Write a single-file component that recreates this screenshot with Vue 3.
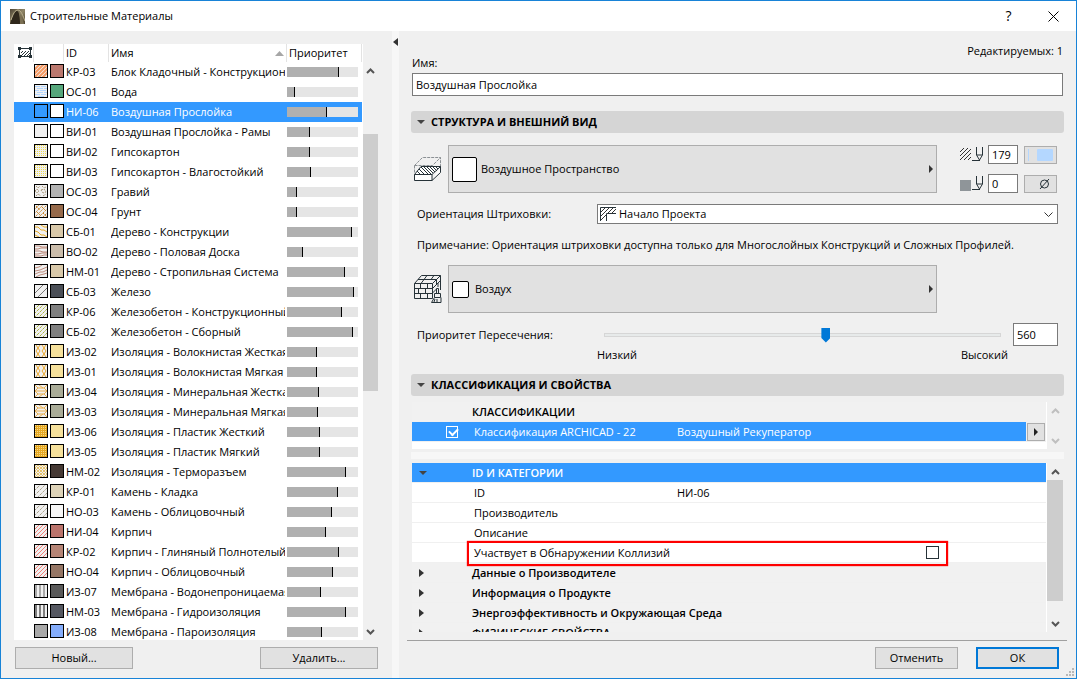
<script setup>
import { ref, computed } from 'vue';

// Build parallel diagonal strokes for a 12x12 hatch swatch
const diagonals = (step) => {
  let d = '';
  for (let s = step; s < 24; s += step) {
    d += `M-1 ${s + 1}L${s + 1} -1`;
  }
  return d;
};

// Build horizontal strokes, used with a dash array for dots and dashes
const rows = (step) => {
  let d = '';
  for (let y = 1; y < 12; y += step) {
    d += `M0 ${y - 0.5}H12`;
  }
  return d;
};

const hatches = {
  block: { d: diagonals(4), color: '#f79a62', width: 2 },
  water: { d: 'M0 1.500h5M6 1.500h5M2 3.500h6M9 3.500h3M0 5.500h4M5 5.500h6M2 7.500h6M9 7.500h3M0 9.500h5M6 9.500h5M3 11.500h6', color: '#b3d6ff' },
  none: { d: '', color: 'none', bg: 'transparent' },
  air: { d: '', color: 'none' },
  gypsum: { d: rows(2), color: '#f0dc50', dash: '1 1' },
  gravel: { d: 'M1 1l2 2 2-2M7 1l2 2 2-1M0 6l2-2 2 2-2 2zM6 5l3-1 2 3-3 1zM1 11l2-2 3 2M8 11l3-2', color: '#a8987a', dash: '2 1' },
  soil: { d: diagonals(4) + 'M1 1l4 4M7 2l4 4M2 7l4 4M8 8l4 4', color: '#c8862f', dash: '2 1' },
  wood: { d: 'M0 2h3l3 3h3l3 2M0 6l3 1 3 3h3l3 2M6 0l3 2h3M0 10l4 2', color: '#e8ac28' },
  floor: { d: 'M0 1h4l3 1h5M0 4h3l3-1h6M0 6h5l3 1h4M0 9h3l4-1h5M0 11h6l3-1h3', color: '#bd8b7c' },
  rafter: { d: 'M0 3l4-1 3-2M0 6l5-1 7-3M0 9l5-2h3l4-2M1 12l4-2 4-1 3-1', color: '#bd8b7c' },
  iron: { d: 'M0 8L8 0M3 12L12 3', color: '#777' },
  concrete: { d: diagonals(4), color: '#a9b23c', dash: '3 1' },
  wool: { d: 'M1 0l2 3-2 3 2 3-2 3M5 0L3 3l2 3-2 3 2 3M7 0l2 3-2 3 2 3-2 3M11 0L9 3l2 3-2 3 2 3', color: '#e9a830' },
  mineral: { d: 'M0 0l3 3h6l3-3M0 6l3-3M9 3l3 3M0 6h12M0 6l3 3h6l3-3M0 12l3-3M9 9l3 3M4 0l4 3M4 12l4-3', color: '#e9b050' },
  plastic: { d: rows(2), color: '#f6d98a', dash: '1 1', bg: '#e5a823' },
  thermo: { d: diagonals(3) + 'M0 9l3 3M0 6l6 6M0 3l9 9M0 0l12 12M3 0l9 9M6 0l6 6M9 0l3 3', color: '#e6c26c' },
  stone: { d: diagonals(5), color: '#aaa28c', dash: '3 1' },
  brick: { d: diagonals(4), color: '#f08078' },
  film: { d: 'M1 0V12M5 0V12M9 0V12', color: '#aaa', width: 2 },
  filmDark: { d: 'M1 0V12M5 0V12M9 0V12', color: '#808080', width: 2 },
  solid: { d: '', color: 'none', bg: '#a9a9a9' },
};

const materials = [
  { id: 'КР-03', name: 'Блок Кладочный - Конструкционный', hatch: 'block', color: '#bb786e', priority: 73 },
  { id: 'ОС-01', name: 'Вода', hatch: 'water', color: '#57a77c', priority: 11 },
  { id: 'НИ-06', name: 'Воздушная Прослойка', hatch: 'none', color: '#ffffff', priority: 56 },
  { id: 'ВИ-01', name: 'Воздушная Прослойка - Рамы', hatch: 'air', color: '#ffffff', priority: 32 },
  { id: 'ВИ-02', name: 'Гипсокартон', hatch: 'gypsum', color: '#ffffff', priority: 32 },
  { id: 'ВИ-03', name: 'Гипсокартон - Влагостойкий', hatch: 'gypsum', color: '#ffffff', priority: 34 },
  { id: 'ОС-03', name: 'Гравий', hatch: 'gravel', color: '#b3b3b3', priority: 14 },
  { id: 'ОС-04', name: 'Грунт', hatch: 'soil', color: '#966a4b', priority: 14 },
  { id: 'СБ-01', name: 'Дерево - Конструкции', hatch: 'wood', color: '#d9c9aa', priority: 92 },
  { id: 'ВО-02', name: 'Дерево - Половая Доска', hatch: 'floor', color: '#cbbdab', priority: 23 },
  { id: 'НМ-01', name: 'Дерево - Стропильная Система', hatch: 'rafter', color: '#d9c9aa', priority: 82 },
  { id: 'СБ-03', name: 'Железо', hatch: 'iron', color: '#4b4f57', priority: 94 },
  { id: 'КР-06', name: 'Железобетон - Конструкционный', hatch: 'concrete', color: '#808080', priority: 77 },
  { id: 'СБ-02', name: 'Железобетон - Сборный', hatch: 'concrete', color: '#808080', priority: 93 },
  { id: 'ИЗ-02', name: 'Изоляция - Волокнистая Жесткая', hatch: 'wool', color: '#f6e19c', priority: 42 },
  { id: 'ИЗ-01', name: 'Изоляция - Волокнистая Мягкая', hatch: 'wool', color: '#f6e19c', priority: 42 },
  { id: 'ИЗ-04', name: 'Изоляция - Минеральная Жесткая', hatch: 'mineral', color: '#aaac98', priority: 45 },
  { id: 'ИЗ-03', name: 'Изоляция - Минеральная Мягкая', hatch: 'mineral', color: '#aaac98', priority: 44 },
  { id: 'ИЗ-06', name: 'Изоляция - Пластик Жесткий', hatch: 'plastic', color: '#f6e19c', priority: 46 },
  { id: 'ИЗ-05', name: 'Изоляция - Пластик Мягкий', hatch: 'plastic', color: '#f6e19c', priority: 46 },
  { id: 'НМ-02', name: 'Изоляция - Терморазъем', hatch: 'thermo', color: '#453934', priority: 83 },
  { id: 'КР-01', name: 'Камень - Кладка', hatch: 'stone', color: '#ded3b8', priority: 72 },
  { id: 'НО-03', name: 'Камень - Облицовочный', hatch: 'stone', color: '#f7f7f7', priority: 63 },
  { id: 'НИ-04', name: 'Кирпич', hatch: 'brick', color: '#bb746c', priority: 55 },
  { id: 'КР-02', name: 'Кирпич - Глиняный Полнотелый', hatch: 'brick', color: '#b68576', priority: 73 },
  { id: 'НО-04', name: 'Кирпич - Облицовочный', hatch: 'brick', color: '#957665', priority: 65 },
  { id: 'ИЗ-07', name: 'Мембрана - Водонепроницаемая', hatch: 'film', color: '#5a5a5a', priority: 48 },
  { id: 'НМ-03', name: 'Мембрана - Гидроизоляция', hatch: 'filmDark', color: '#555861', priority: 83 },
  { id: 'ИЗ-08', name: 'Мембрана - Пароизоляция', hatch: 'solid', color: '#85adfb', priority: 49 },
];

const groups = [
  'Данные о Производителе',
  'Информация о Продукте',
  'Энергоэффективность и Окружающая Среда',
  'ФИЗИЧЕСКИЕ СВОЙСТВА',
];

const selectedId = ref('НИ-06');
const selected = computed(() => materials.find((m) => m.id === selectedId.value));
const fillPen = ref('179');
const backPen = ref('0');
const orientation = ref('project');
const intersection = ref(560);
const classified = ref(true);
const collision = ref(false);
</script>

<template>
  <div class="window">
    <header class="titlebar">
      <svg class="app-icon" viewBox="0 0 15 15">
        <defs>
          <linearGradient id="bronze" x1="0" y1="0" x2="1" y2="1">
            <stop offset="0" stop-color="#4d4433" />
            <stop offset="0.5" stop-color="#8f8566" />
            <stop offset="1" stop-color="#4a402d" />
          </linearGradient>
        </defs>
        <rect width="15" height="15" fill="url(#bronze)" />
        <path d="M0 15C2 9 4 2 7 2c2 0 3 6 3 13z" fill="#2f281b" />
        <path d="M1 11C3 5 5 1 8 1c3 0 5 6 7 11" fill="none" stroke="#b9af8d" />
        <path d="M9 3c2 3 4 8 5 12h-4c0-5 0-9-1-12z" fill="#7a6f54" />
      </svg>
      <h1>Строительные Материалы</h1>
      <button class="title-button" type="button">?</button>
      <button class="title-button" type="button" aria-label="Закрыть">
        <svg width="11" height="11" viewBox="0 0 11 11"><path d="M.5.5l10 10M10.500.5l-10 10" fill="none" stroke="#000" /></svg>
      </button>
    </header>

    <div class="content">
      <section class="list-pane">
        <div class="list-area">
          <div class="list">
            <table>
              <colgroup>
                <col class="col-icon" />
                <col class="col-swatch" />
                <col class="col-id" />
                <col />
                <col class="col-priority" />
              </colgroup>
              <thead>
                <tr>
                  <th>
                    <svg class="fill-icon" width="14" height="12" viewBox="0 0 14 12">
                      <path d="M1.500 1.500h11v8h-11zM3 9l5-5M6 9l5-5M9 9l3-3M3 6l2-2" fill="none" stroke="#263238" />
                      <path d="M0 0h3v3H0zM11 0h3v3h-3zM0 8h3v3H0zM11 8h3v3h-3z" fill="#263238" />
                    </svg>
                  </th>
                  <th></th>
                  <th class="id">ID</th>
                  <th class="name">
                    <div class="sort">
                      Имя
                      <svg width="9" height="5" viewBox="0 0 9 5"><path d="M0 5L4.500 0 9 5z" fill="#a6a6a6" /></svg>
                    </div>
                  </th>
                  <th class="priority">Приоритет</th>
                </tr>
              </thead>
              <tbody>
                <tr
                  v-for="item in materials"
                  :key="item.id"
                  :class="{ active: item.id === selectedId }"
                  @click="selectedId = item.id"
                >
                  <td></td>
                  <td>
                    <svg class="swatches" width="30" height="14" viewBox="0 0 30 14">
                      <rect x="0.5" y="0.5" width="13" height="13" :fill="hatches[item.hatch].bg || '#f0f0f0'" />
                      <svg x="1" y="1" width="12" height="12" viewBox="0 0 12 12">
                        <path
                          :d="hatches[item.hatch].d"
                          :stroke="hatches[item.hatch].color"
                          :stroke-width="hatches[item.hatch].width || 1"
                          :stroke-dasharray="hatches[item.hatch].dash"
                          fill="none"
                        />
                      </svg>
                      <rect x="0.5" y="0.5" width="13" height="13" fill="none" stroke="#000" />
                      <rect x="16.500" y="0.5" width="13" height="13" :fill="item.color" stroke="#000" />
                    </svg>
                  </td>
                  <td class="id">{{ item.id }}</td>
                  <td class="name"><div class="name-text">{{ item.name }}</div></td>
                  <td>
                    <div class="bar"><div class="bar-fill" :style="{ width: item.priority + '%' }"></div></div>
                  </td>
                </tr>
              </tbody>
            </table>
          </div>
          <div class="scrollbar list-scroll">
            <svg width="9" height="6" viewBox="0 0 9 6"><path d="M1 5l3.500-3.500L8 5" /></svg>
            <div class="track"><div class="thumb"></div></div>
            <svg width="9" height="6" viewBox="0 0 9 6"><path d="M1 1l3.500 3.500L8 1" /></svg>
          </div>
        </div>
        <div class="list-buttons">
          <button class="button wide" type="button">Новый...</button>
          <button class="button wide" type="button">Удалить...</button>
        </div>
      </section>

      <button class="splitter" type="button" aria-label="Свернуть">
        <svg width="5" height="8" viewBox="0 0 5 8"><path d="M5 0v8L0 4z" fill="#333" /></svg>
      </button>

      <section class="details">
        <div class="name-head">
          <label for="material-name">Имя:</label>
          <span>Редактируемых: 1</span>
        </div>
        <input id="material-name" class="field name-field" type="text" :value="selected.name" />

        <button class="section-head" type="button">
          <svg width="8" height="4" viewBox="0 0 8 4"><path d="M0 0h8L4 4z" fill="#444" /></svg>
          СТРУКТУРА И ВНЕШНИЙ ВИД
        </button>

        <div class="picker-row first">
          <svg class="side-icon" width="28" height="26" viewBox="0 0 28 26">
            <path d="M.5 9.500L8.500 1.500h18v9M.5 9.500v8" fill="none" stroke="#8b9094" stroke-dasharray="3 1" />
            <path d="M.5 9.500h18l8-8" fill="none" stroke="#8b9094" stroke-dasharray="3 1" />
            <path d="M.5 18.500h17.500v6H.5zM.5 18.500L7 10.500h19.500L18 18.500M26.500 10.500v6L18 24.500" fill="#fff" stroke="#263238" />
            <path d="M3 15l3 3M5 13l5 5M7 11l7 7M10 11l7 7M13 11l6 6M16 11l5 5M19 11l4 4M22 11l2 2" fill="none" stroke="#263238" />
          </svg>
          <button class="picker" type="button">
            <span class="preview large"></span>
            <span>Воздушное Пространство</span>
            <svg class="picker-arrow" width="4" height="8" viewBox="0 0 4 8"><path d="M0 0l4 4-4 4z" fill="#333" /></svg>
          </button>
          <div class="pens">
            <svg width="24" height="15" viewBox="0 0 24 15">
              <path d="M0 5l4-4M0 9l8-8M0 13l11-11M4 13l7-7M8 13l3-3" fill="none" stroke="#333" />
              <path d="M16.500 0v8l3 5 3-5V0M17 8h5M12 13.500h8" fill="none" stroke="#263238" />
            </svg>
            <input v-model="fillPen" class="field pen-field" type="text" aria-label="Перо штриховки" />
            <button class="button pen-button" type="button" aria-label="Цвет пера штриховки">
              <svg width="25" height="12" viewBox="0 0 25 12">
                <path d="M.5 0v12" stroke="#b4d7ff" />
                <rect x="9" width="16" height="12" rx="1" fill="#b4d7ff" />
              </svg>
            </button>
            <svg width="24" height="15" viewBox="0 0 24 15">
              <rect y="4" width="11" height="11" fill="#8f9599" />
              <path d="M16.500 0v8l3 5 3-5V0M17 8h5M12 13.500h8" fill="none" stroke="#263238" />
            </svg>
            <input v-model="backPen" class="field pen-field" type="text" aria-label="Перо фона" />
            <button class="button pen-button" type="button" aria-label="Цвет пера фона">
              <svg width="25" height="12" viewBox="0 0 25 12">
                <ellipse cx="16.500" cy="6" rx="4" ry="4" fill="none" stroke="#263238" />
                <path d="M12 11L21 1" stroke="#263238" />
              </svg>
            </button>
          </div>
        </div>

        <div class="orientation">
          <label for="orientation">Ориентация Штриховки:</label>
          <div class="select-box">
            <select id="orientation" v-model="orientation" class="field">
              <option value="project">Начало Проекта</option>
              <option value="element">Начало Элемента</option>
            </select>
            <svg class="select-icon" width="16" height="14" viewBox="0 0 16 14">
              <path d="M.5 14V.5H16M6.500 14V6.500H16" fill="none" stroke="#263238" />
              <path d="M1 5l4-4M1 9l8-8M1 13l5-5M7 7l6-6M11 7l5-5" fill="none" stroke="#333" />
            </svg>
            <svg class="select-arrow" width="9" height="5" viewBox="0 0 9 5"><path d="M.5.5l4 4 4-4" fill="none" stroke="#333" /></svg>
          </div>
        </div>

        <p class="note">
          Примечание: Ориентация штриховки доступна только для Многослойных Конструкций и Сложных Профилей.
        </p>

        <div class="picker-row">
          <svg class="side-icon" width="28" height="29" viewBox="0 0 28 29">
            <path d="M.5 8.500h18v15H.5zM.5 8.500l7-8h19l-8 8M26.500.5V15M.5 13.500h18M.5 18.500h18M6.500 8.500v5M13.500 8.500v5M4.500 13.500v5M11.500 13.500v5M6.500 18.500v5M13.500 18.500v5M4 4.500h18M13 .5l-3 4M20 .5l-3 4M10 4.500l-3 4M18.500 13.500l8-8M18.500 18l4-4M22.500 4.500v5M24 8v4" fill="none" stroke="#263238" />
            <path d="M20.500 18.500h6v4h-6zM22.500 18.500v-5h2v5M20.500 22.500l-3 5h9.500v-5M20 27l1-3M23 27v-3" fill="#efefef" stroke="#263238" />
          </svg>
          <button class="picker" type="button">
            <span class="preview"></span>
            <span>Воздух</span>
            <svg class="picker-arrow" width="4" height="8" viewBox="0 0 4 8"><path d="M0 0l4 4-4 4z" fill="#333" /></svg>
          </button>
          <div class="pens"></div>
        </div>

        <div class="intersection">
          <label for="intersection">Приоритет Пересечения:</label>
          <input id="intersection" v-model="intersection" class="slider" type="range" min="0" max="999" />
          <input v-model="intersection" class="field priority-field" type="text" aria-label="Значение приоритета" />
        </div>
        <div class="scale">
          <span>Низкий</span>
          <span>Высокий</span>
        </div>

        <button class="section-head second" type="button">
          <svg width="8" height="4" viewBox="0 0 8 4"><path d="M0 0h8L4 4z" fill="#444" /></svg>
          КЛАССИФИКАЦИЯ И СВОЙСТВА
        </button>

        <div class="tree classes">
          <div class="tree-body">
            <div class="tree-row group"><span class="tree-title">КЛАССИФИКАЦИИ</span></div>
            <div class="tree-row active">
              <span class="check-cell"><input id="archicad" v-model="classified" class="check light" type="checkbox" /></span>
              <label class="tree-label" for="archicad">Классификация ARCHICAD - 22</label>
              <span class="tree-value">Воздушный Рекуператор</span>
              <button class="button row-button" type="button" aria-label="Выбрать">
                <svg width="4" height="8" viewBox="0 0 4 8"><path d="M0 0l4 4-4 4z" fill="#222" /></svg>
              </button>
            </div>
          </div>
          <div class="scrollbar disabled">
            <svg width="9" height="6" viewBox="0 0 9 6"><path d="M1 5l3.500-3.500L8 5" /></svg>
            <svg width="9" height="6" viewBox="0 0 9 6"><path d="M1 1l3.500 3.500L8 1" /></svg>
          </div>
        </div>

        <div class="tree-splitter"></div>

        <div class="tree props">
          <div class="tree-body">
            <div class="tree-row active">
              <svg class="expander" width="8" height="4" viewBox="0 0 8 4"><path d="M0 0h8L4 4z" fill="#444" /></svg>
              <span class="tree-title">ID И КАТЕГОРИИ</span>
            </div>
            <div class="tree-row">
              <span class="tree-label">ID</span>
              <span class="tree-value">{{ selected.id }}</span>
            </div>
            <div class="tree-row"><span class="tree-label">Производитель</span></div>
            <div class="tree-row"><span class="tree-label">Описание</span></div>
            <div class="tree-row marked">
              <label class="tree-label" for="collision">Участвует в Обнаружении Коллизий</label>
              <input id="collision" v-model="collision" class="check" type="checkbox" />
              <div class="highlight"></div>
            </div>
            <div v-for="group in groups" :key="group" class="tree-row group">
              <svg class="expander" width="5" height="8" viewBox="0 0 5 8"><path d="M0 0l5 4-5 4z" fill="#333" /></svg>
              <span class="tree-title">{{ group }}</span>
            </div>
          </div>
          <div class="scrollbar">
            <svg width="9" height="6" viewBox="0 0 9 6"><path d="M1 5l3.500-3.500L8 5" /></svg>
            <div class="track"><div class="thumb"></div></div>
            <svg width="9" height="6" viewBox="0 0 9 6"><path d="M1 1l3.500 3.500L8 1" /></svg>
          </div>
        </div>

        <footer class="actions">
          <button class="button" type="button">Отменить</button>
          <button class="button primary" type="button">ОК</button>
        </footer>
      </section>
    </div>

    <svg class="grip" width="8" height="8" viewBox="0 0 8 8">
      <path d="M6 0h2v2H6zM3 3h2v2H3zM6 3h2v2H6zM0 6h2v2H0zM3 6h2v2H3zM6 6h2v2H6z" fill="#b8b8b8" />
    </svg>
  </div>
</template>

<style>
body {
  background: #f0f0f0;
}
</style>

<style scoped>
* {
  box-sizing: border-box;
}

.window {
  position: relative;
  display: flex;
  flex-direction: column;
  height: 100vh;
  border: 1px solid #1883d7;
  background: #f0f0f0;
  color: #000;
  font-family: "Open Sans", "Noto Sans", sans-serif;
  font-size: 11px;
  line-height: 18px;
}

button,
input,
select {
  margin: 0;
  font: inherit;
  color: inherit;
}

svg {
  display: block;
  flex: none;
}

.titlebar {
  display: flex;
  align-items: center;
  flex: none;
  height: 30px;
  padding-left: 9px;
  background: #fff;
}

.app-icon {
  width: 15px;
  height: 15px;
}

h1 {
  flex: 1;
  margin: 0 0 0 5px;
  font-size: 11px;
  font-weight: 400;
}

.title-button {
  display: flex;
  align-items: center;
  justify-content: center;
  width: 45px;
  height: 30px;
  padding: 0;
  border: 0;
  background: none;
  font-size: 14px;
}

.content {
  display: flex;
  flex: 1;
  min-height: 0;
}

.list-pane {
  display: flex;
  flex-direction: column;
  flex: none;
  width: 391px;
  padding: 13px 14px 9px 13px;
}

.list-area {
  display: flex;
  flex: 1;
  min-height: 0;
}

.list {
  flex: 1;
  overflow: hidden;
  background: #fff;
}

table {
  width: 348px;
  border-collapse: collapse;
  table-layout: fixed;
}

.col-icon {
  width: 20px;
}

.col-swatch {
  width: 30px;
}

.col-id {
  width: 45px;
}

.col-priority {
  width: 75px;
}

th,
td {
  padding: 0;
  text-align: left;
  font-weight: 400;
  white-space: nowrap;
}

th {
  height: 18px;
  box-shadow: inset -1px 0 #e3e3e3;
}

td {
  height: 20px;
}

.fill-icon {
  margin-left: 4px;
}

.swatches {
  margin-bottom: 2px;
}

.id,
.name {
  padding-left: 2px;
}

.name-text {
  margin-right: 2px;
  overflow: hidden;
}

th.priority {
  padding-left: 2px;
}

.sort {
  display: flex;
  align-items: center;
  justify-content: space-between;
  padding-right: 3px;
}

.active {
  background: #3399ff;
  color: #fff;
}

.bar {
  width: 71px;
  height: 10px;
  background: #e5e5e5;
}

.bar-fill {
  height: 10px;
  border-right: 1px solid #000;
  background: #b0b0b0;
}

.scrollbar {
  display: flex;
  flex-direction: column;
  align-items: center;
  flex: none;
  width: 17px;
  padding: 6px 0 5px;
  border-left: 1px solid #fff;
  background: #f0f0f0;
}

.scrollbar path {
  fill: none;
  stroke: #555;
  stroke-width: 2;
}

.list-scroll {
  width: 16px;
  padding-top: 24px;
}

.track {
  display: flex;
  flex: 1;
  flex-direction: column;
  align-self: stretch;
  padding: 5px 0 20px;
}

.list-scroll .track {
  padding: 60px 0 0;
}

.thumb {
  height: 100%;
  background: #cdcdcd;
}

.list-scroll .thumb {
  height: 52%;
}

.scrollbar.disabled {
  justify-content: space-between;
}

.scrollbar.disabled path {
  stroke: #bfbfbf;
}

.list-buttons {
  display: flex;
  justify-content: space-between;
  margin-top: 7px;
  padding-left: 1px;
}

.button {
  display: flex;
  align-items: center;
  justify-content: center;
  width: 83px;
  height: 22px;
  padding: 0;
  border: 1px solid #adadad;
  background: #e1e1e1;
}

.button.wide {
  width: 118px;
}

.button.primary {
  border: 2px solid #0078d7;
}

.splitter {
  display: flex;
  justify-content: center;
  align-items: flex-start;
  flex: none;
  width: 7px;
  padding: 7px 0 0;
  border: 0;
  background: #f7f7f7;
}

.details {
  display: flex;
  flex: 1;
  flex-direction: column;
  min-width: 0;
  padding: 11px 12px 9px;
}

.name-head {
  display: flex;
  justify-content: space-between;
  padding: 0 1px;
}

.name-head label {
  margin-top: 12px;
}

.field {
  padding: 0 3px;
  border: 1px solid #7a7a7a;
  border-radius: 0;
  outline: 0;
  background: #fff;
}

.name-field {
  flex: none;
  height: 23px;
  margin: 1px 1px 0;
}

.section-head {
  display: flex;
  align-items: center;
  gap: 6px;
  flex: none;
  height: 22px;
  margin-top: 15px;
  padding: 0 6px;
  border: 0;
  border-radius: 3px;
  background: #d5d5d5;
  font-weight: 700;
}

.section-head.second {
  margin-top: 10px;
}

.picker-row {
  display: flex;
  align-items: center;
  flex: none;
  margin-top: 11px;
  padding-right: 6px;
}

.picker-row.first {
  margin-top: 12px;
}

.side-icon {
  margin: 0 6px 0 3px;
}

.picker {
  display: flex;
  align-items: center;
  gap: 4px;
  flex: 1;
  height: 48px;
  padding: 0 3px;
  border: 1px solid #adadad;
  background: #e1e1e1;
}

.preview {
  width: 17px;
  height: 17px;
  margin-right: 2px;
  border: 1px solid #000;
  border-radius: 2px;
  background: #fff;
}

.preview.large {
  width: 25px;
  height: 25px;
  margin-right: 0;
}

.picker-arrow {
  margin-left: auto;
}

.pens {
  display: grid;
  grid-template-columns: 24px 32px 33px;
  align-items: center;
  gap: 10px 4px;
  width: 121px;
  padding-left: 23px;
}

.pen-field {
  width: 30px;
  height: 19px;
}

.pen-button {
  width: 33px;
  height: 18px;
}

.orientation,
.intersection {
  display: flex;
  align-items: center;
  flex: none;
  margin-top: 11px;
  padding: 0 6px;
}

.orientation label {
  width: 180px;
}

.select-box {
  position: relative;
  flex: 1;
}

select {
  display: block;
  width: 100%;
  height: 20px;
  appearance: none;
}

select.field {
  padding-left: 21px;
}

.select-icon {
  position: absolute;
  top: 3px;
  left: 3px;
}

.select-arrow {
  position: absolute;
  top: 8px;
  right: 5px;
}

.note {
  flex: none;
  margin: 12px 0 0;
  padding: 0 6px;
}

.intersection {
  margin-top: 10px;
}

.intersection label {
  width: 187px;
}

.slider {
  flex: 1;
  min-width: 0;
  height: 16px;
  margin-right: 12px;
  appearance: none;
  background: none;
}

.slider::-webkit-slider-runnable-track {
  height: 4px;
  border: 1px solid #d6d6d6;
  background: #e7eaea;
}

.slider::-webkit-slider-thumb {
  width: 9px;
  height: 15px;
  margin-top: -6px;
  appearance: none;
  background: #0078d7;
  clip-path: polygon(0 0, 100% 0, 100% 70%, 50% 100%, 0 70%);
}

.priority-field {
  width: 45px;
  height: 23px;
}

.scale {
  display: flex;
  justify-content: space-between;
  flex: none;
  padding: 0 56px 0 186px;
}

.tree {
  display: flex;
  flex: none;
  margin: 0 1px;
}

.tree-body {
  flex: 1;
  overflow: hidden;
  background: #fff;
}

.classes {
  height: 47px;
  margin-top: 6px;
}

.tree-splitter {
  flex: none;
  height: 7px;
  margin: 3px 0 4px;
  background: #f7f7f7;
}

.props {
  flex: 1;
  min-height: 0;
}

.tree-row {
  position: relative;
  display: flex;
  align-items: center;
  height: 20px;
  border-bottom: 1px solid #f0f0f0;
}

.tree-row.group {
  background: #f1f1f1;
}

.tree-title {
  margin-left: 60px;
  font-weight: 600;
}

.tree-label {
  width: 203px;
  margin-left: 62px;
  white-space: nowrap;
}

.expander {
  position: absolute;
  left: 7px;
}

.check-cell {
  width: 62px;
  padding-left: 34px;
}

.check-cell + .tree-label {
  margin-left: 0;
}

.check {
  display: block;
  flex: none;
  width: 13px;
  height: 13px;
  border: 1px solid #263238;
  background: #fff;
  appearance: none;
}

.check.light {
  position: relative;
  width: 12px;
  height: 12px;
  border-color: #fff;
  background: none;
}

.check:checked::after {
  content: "";
  position: absolute;
  top: 1px;
  left: 2px;
  width: 7px;
  height: 4px;
  border-bottom: 2px solid #fff;
  border-left: 2px solid #fff;
  transform: rotate(-45deg);
}

.row-button {
  width: 18px;
  height: 18px;
  margin-left: auto;
  margin-right: 1px;
  box-shadow: 0 0 0 1px #f0f0f0;
}

/* The framed row keeps its tick box at the frame's right edge */
.tree-row.marked {
  padding-right: 107px;
}

.marked .check {
  margin-left: auto;
}

.highlight {
  position: absolute;
  z-index: 1;
  top: -2px;
  right: 98px;
  bottom: -4px;
  left: 55px;
  border: 2px solid #fe0000;
  box-shadow: 0 0 1px #fe0000;
  pointer-events: none;
}

.actions {
  display: flex;
  justify-content: flex-end;
  gap: 18px;
  flex: none;
  margin: 8px -3px 0 -4px;
  padding: 6px 8px 0 0;
  border-top: 1px solid #a0a0a0;
}

.grip {
  position: absolute;
  right: 2px;
  bottom: 2px;
}
</style>
